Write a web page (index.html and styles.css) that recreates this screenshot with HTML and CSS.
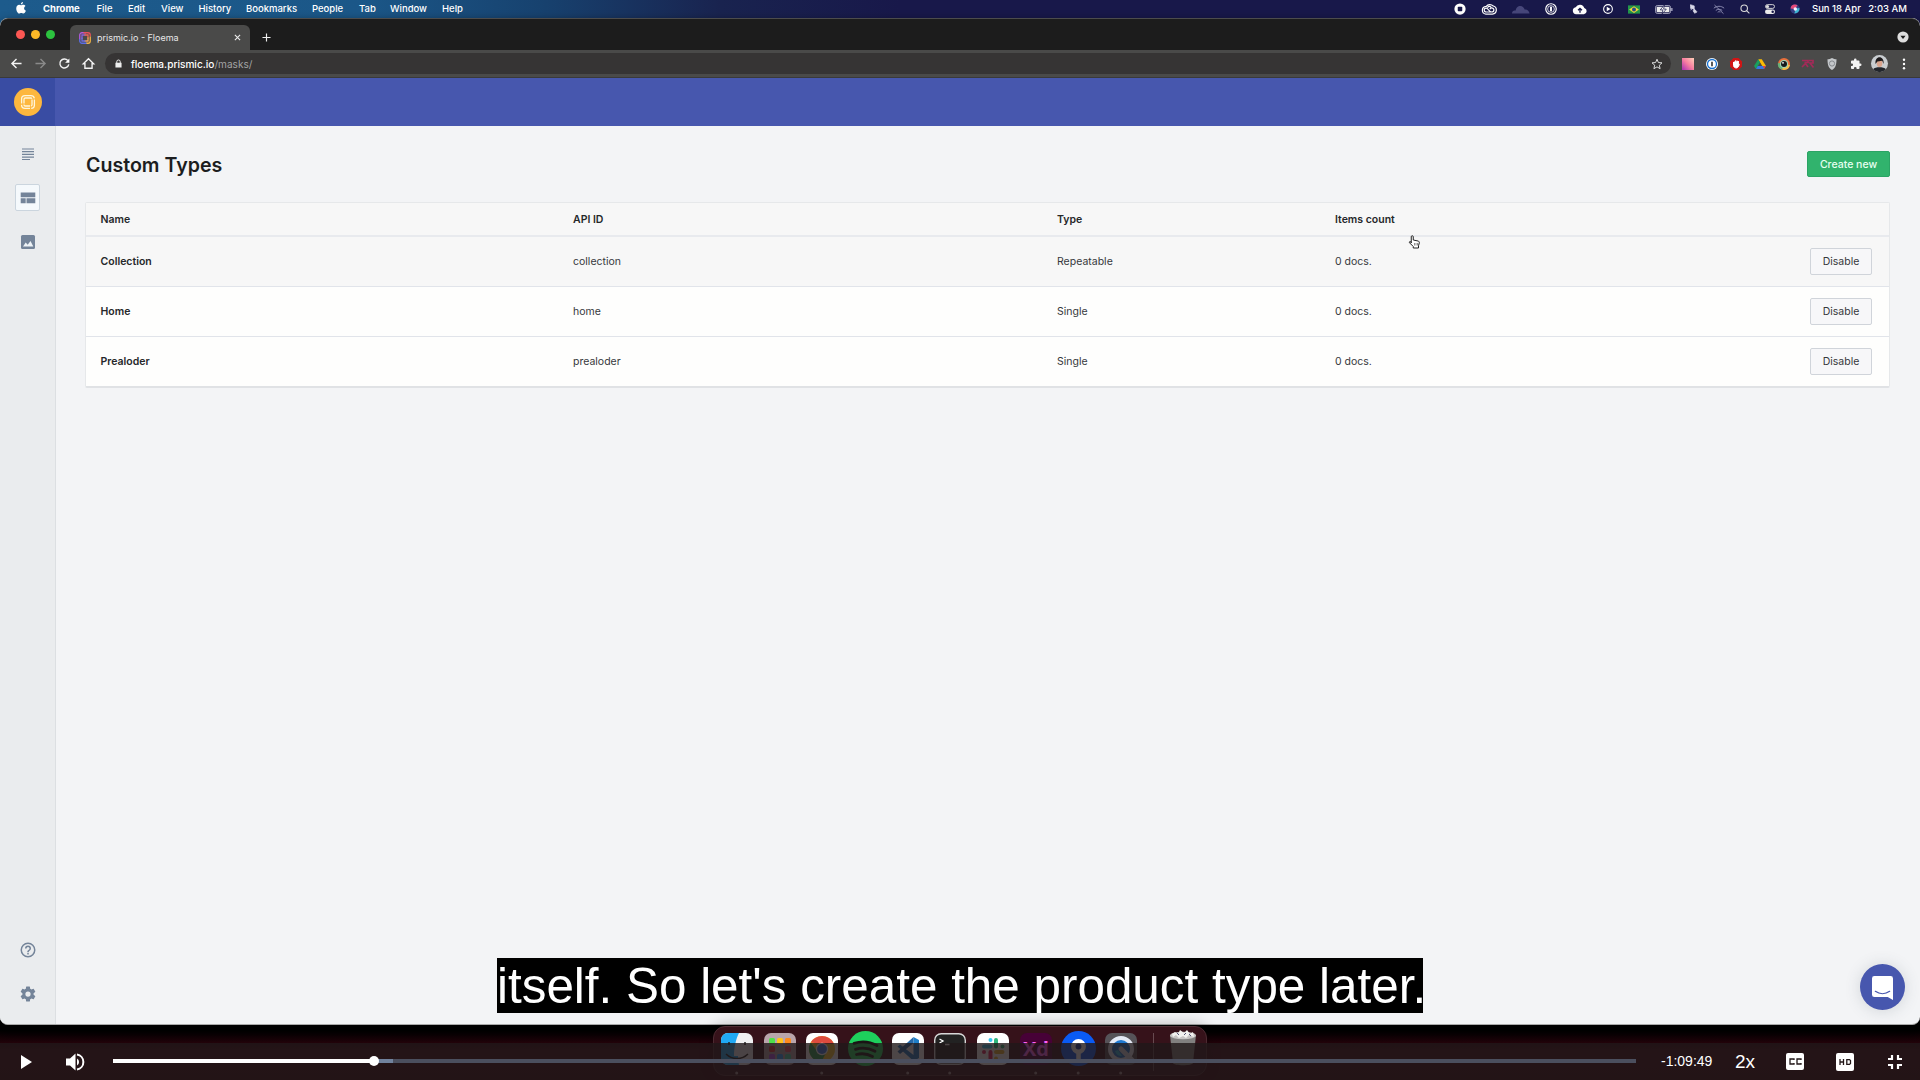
FILE: index.html
```html
<!DOCTYPE html>
<html lang="en">
<head>
<meta charset="utf-8">
<title>prismic.io - Floema</title>
<link rel="stylesheet" href="styles.css">
</head>
<body>
<div class="desktop">
  <header class="menubar">
    <svg class="apple" viewBox="0 0 20 24"><path d="M14 0c.2 2.500-2 5-4.300 5C9.400 2.600 11.800.2 14 0zM10 6.500c1 0 2.300-1.200 4.300-1.200 2 0 3.700 1 4.700 2.500-4 2.400-3.300 7.800.8 9.500-1 2.700-3 5.700-5 5.700-1.500 0-2.300-1-4.200-1s-2.700 1-4.200 1C3.700 23 .5 17.500.5 12.800c0-4.800 3-7.400 5.700-7.400 1.700 0 3 1.100 3.800 1.100z"/></svg>
    <nav class="menus"><b>Chrome</b><span>File</span><span>Edit</span><span>View</span><span>History</span><span>Bookmarks</span><span>People</span><span>Tab</span><span>Window</span><span>Help</span></nav>
    <div class="tray">
      <svg viewBox="0 0 16 16"><circle cx="8" cy="8" r="7.500" fill="#fff"/><rect x="5" y="5" width="6" height="6" rx="1" fill="#18184a"/></svg>
      <svg class="w16" viewBox="0 0 20 14" fill="none" stroke="#fff" stroke-width="1.500"><path d="M6 12.800h8.500a5.200 5.200 0 0 0 1-10.200C13 0 8.500 0 6.500 3 0 3.500 0 12 6 12.800z"/><path d="M12 10.200H6.500c-3.500 0-3.500-5 0-5 2.500 0 3.500 5 7 5s3.700-5.200 0-5.200c-1.500 0-2 .8-2.500 1.500M8 4.500c2-2.500 4-1.500 5 0"/></svg>
      <svg class="w18" viewBox="0 0 20 10"><path d="M0 9.500C0 6.500 2 6 4 6 5 2 7 1 9 1c3 0 4.500 2 5 4 3-.5 5 1.500 5.500 4.500z" fill="#47477a"/></svg>
      <svg viewBox="0 0 16 16" fill="none" stroke="#fff"><circle cx="8" cy="8" r="7" stroke-width="1.600"/><circle cx="8" cy="8" r="4.500"/><path d="M8 5v6" stroke-width="2.600"/></svg>
      <svg class="w16" viewBox="0 0 20 14"><path d="M5 13a4.500 4.500 0 0 1-.5-8.900A6 6 0 0 1 15.500 5 4.100 4.100 0 0 1 15 13z" fill="#fff"/><path d="M10 11V5.500M7.500 8 10 5.500 12.500 8" fill="none" stroke="#18184a" stroke-width="1.700"/></svg>
      <svg class="w11" viewBox="0 0 16 16"><circle cx="8" cy="8" r="7" fill="none" stroke="#fff" stroke-width="1.700"/><path d="M6 4.500 12 8l-6 3.500z" fill="#fff"/></svg>
      <svg class="w12" viewBox="0 0 16 11"><path d="M0 0h16v11H0z" fill="#23974a"/><path d="m8 1 6.500 4.500L8 10 1.500 5.500z" fill="#f5d437"/><circle cx="8" cy="5.500" r="2.600" fill="#25498f"/></svg>
      <svg class="w18" viewBox="0 0 24 12"><rect x=".7" y=".7" width="20" height="10.600" rx="2.500" fill="none" stroke="#c9c9dc"/><path d="M22.500 4v4" stroke="#c9c9dc" stroke-width="1.500"/><rect x="2.200" y="2.200" width="17" height="7.600" rx="1" fill="#eee"/><path d="M12.500 0 7 6.500h3.500L9.500 12 15 5.500h-3.500z" fill="#fff" stroke="#18184a"/></svg>
      <svg class="w11" viewBox="0 0 14 16"><path d="m3 1 6 2v5L3 7zM9 8l4 4-3 3-3-4z" fill="#d9d9e8" stroke="#d9d9e8"/><path d="m3 2 10 12M3 10l3-3" fill="none" stroke="#d9d9e8" stroke-width="1.300"/></svg>
      <svg class="w12" viewBox="0 0 18 14" fill="none" stroke="#8d8db2" stroke-width="1.500"><path d="M1 5c4.500-4 11.500-4 16 0M4 8.500c3-2.500 7-2.500 10 0M7 11.200c1-1 3-1 4 0M2 0l14 13.500"/></svg>
      <svg class="w11" viewBox="0 0 16 16" fill="none" stroke="#ddd" stroke-width="1.700"><circle cx="6.700" cy="6.700" r="5.200"/><path d="m10.500 10.500 4.500 4.500"/></svg>
      <svg class="w11" viewBox="0 0 16 16"><rect x=".8" y="1" width="14.400" height="6" rx="3" fill="none" stroke="#ddd" stroke-width="1.500"/><circle cx="4" cy="4" r="2.500" fill="#ddd"/><rect y="8.800" width="16" height="7" rx="3.500" fill="#eee"/><circle cx="12.300" cy="12.300" r="2" fill="#18184a"/></svg>
      <svg class="w11" viewBox="0 0 16 16"><circle cx="8" cy="8" r="7.500" fill="#343b83"/><path d="M1 7C1 2 7-1 12 2l-4 6z" fill="#e44978"/><path d="M15 6c1 5-3 9-8 9l2-7z" fill="#3fb8d5"/><circle cx="8.500" cy="8" r="2.800" fill="#eef"/></svg>
    </div>
    <div class="clock"><span>Sun 18 Apr</span><span>2:03 AM</span></div>
  </header>

  <main class="window">
    <div class="tabstrip">
      <div class="lights"><i class="red"></i><i class="yellow"></i><i class="green"></i></div>
      <div class="tab">
        <svg class="favicon" viewBox="0 0 24 24" fill="none" stroke-width="2.600"><path d="M1.500 15V6a4.500 4.500 0 0 1 4.500-4.500h8" stroke="#b45be0"/><path d="M9 1.500h9A4.500 4.500 0 0 1 22.500 6v3" stroke="#e8505b"/><path d="M22.500 9v9a4.500 4.500 0 0 1-4.500 4.500h-4" stroke="#f3b544"/><path d="M15 22.500H6A4.500 4.500 0 0 1 1.500 18v-4" stroke="#5b6ee8"/><path d="M6 14V6h7" stroke="#8661dc"/><path d="M11 6h7v7" stroke="#ed6755"/><path d="M18 11v7h-7" stroke="#f0a45a"/><path d="M13 18H6v-7" stroke="#6f6ce0"/></svg>
        <span>prismic.io - Floema</span>
        <svg class="close" viewBox="0 0 8 8"><path d="m1 1 6 6M7 1 1 7"/></svg>
      </div>
      <svg class="plus" viewBox="0 0 10 10"><path d="M5 .5v9M.5 5h9"/></svg>
      <svg class="tabsearch" viewBox="0 0 12 12"><circle cx="6" cy="6" r="5.600" fill="#dedede"/><path d="M3.400 4.800h5.200L6 8z" fill="#1c1c1c"/></svg>
    </div>
    <div class="toolbar">
      <div class="navbtns">
        <svg viewBox="0 0 12 12"><path d="M11.500 6H1.200M6 1 1 6l5 5"/></svg>
        <svg class="dim" viewBox="0 0 12 12"><path d="M.5 6h10.300M6 1l5 5-5 5"/></svg>
        <svg viewBox="0 0 12 12"><path d="M10.700 7A4.900 4.900 0 1 1 9.600 2.700"/><path d="M11.300.5v4.600H6.700z" fill="#fff" stroke="none"/></svg>
        <svg viewBox="0 0 12 12"><path d="M.4 6.300 6 .9l5.600 5.400H9.900V11.200H2.100V6.300z"/></svg>
      </div>
      <div class="omnibox">
        <svg class="lock" viewBox="0 0 8 10"><path d="M.5 4h7v5.500h-7z" fill="#eee"/><path d="M2 4.500V3a2 2 0 0 1 4 0v1.500" fill="none" stroke="#eee" stroke-width="1.100"/></svg>
        <p>floema.prismic.io<span>/masks/</span></p>
        <svg class="star" viewBox="0 0 24 24"><path d="m12 2.500 2.800 6.600 7.200.6-5.400 4.700 1.600 7-6.200-3.700-6.200 3.700 1.600-7L2 9.700l7.200-.6z"/></svg>
      </div>
      <div class="exts">
        <svg viewBox="0 0 12 12"><defs><linearGradient id="pk" x1="1" y1="0" x2="0" y2="1"><stop offset="0" stop-color="#ffd0b8"/><stop offset=".5" stop-color="#f77da0"/><stop offset="1" stop-color="#a82fb4"/></linearGradient></defs><path d="M0 0h12v12H0z" fill="url(#pk)"/></svg>
        <svg viewBox="0 0 12 12"><circle cx="6" cy="6" r="6" fill="#fff"/><circle cx="6" cy="6" r="4.500" fill="#fff" stroke="#1a73d1" stroke-width="1.300"/><path d="M6 3.700v4.600" stroke="#222" stroke-width="1.500"/></svg>
        <svg viewBox="0 0 12 12"><path d="M3.500 0h5L12 3.500v5L8.500 12h-5L0 8.500v-5z" fill="#d01515"/><path d="M3.500 4v3.500C3.500 9 5 10 6.300 10 8 10 9 8 9.300 6.200l-1 .3V3M4.300 6.500V3.500M5.600 6V2.300M7 6V2.500M8 6V3.200" fill="#fff" stroke="#fff" stroke-width="1"/></svg>
        <svg viewBox="0 0 12 12"><path d="M4.200 1.200h3.600L12 8H8.300z" fill="#fbbc04"/><path d="M4.200 1.200 6 4.400 2 11 0 8z" fill="#18a05e"/><path d="M3.700 8H12l-2 3H2z" fill="#3777e3"/><path d="M9 8h3l-2 3z" fill="#ea4335"/></svg>
        <svg viewBox="0 0 12 12"><circle cx="6" cy="6" r="6" fill="#e9703b"/><path d="M1 9A6 6 0 0 0 12 7L6 6z" fill="#f2c14c"/><path d="M0 5a6 6 0 0 0 4 6.700L6 6z" fill="#65b37a"/><circle cx="6" cy="6" r="4" fill="#9fd5b5"/><circle cx="6" cy="6" r="3" fill="#161b1e"/><circle cx="5" cy="4.800" r=".9" fill="#fff"/></svg>
        <svg viewBox="0 0 12 12"><path d="M0 2.500h6v2H2.500M0 9l3.500-3.500L6 9M7 2.500h4V5H8l3.500 4.500" fill="none" stroke="#a32a58" stroke-width="1.700"/></svg>
        <svg viewBox="0 0 12 12"><path d="M6 0c1.500 1 3 1.200 4.500 1.300C10.500 7 9.500 10 6 12 2.500 10 1.500 7 1.500 1.300 3 1.200 4.500 1 6 0z" fill="#c5c8cb"/><circle cx="6" cy="5.500" r="2.600" fill="none" stroke="#85898d"/></svg>
        <svg viewBox="0 0 24 24"><path d="M20.500 11H19V7a2 2 0 0 0-2-2h-4V3.500a2.500 2.500 0 0 0-5 0V5H4a2 2 0 0 0-2 2v3.800h1.500a2.700 2.700 0 0 1 0 5.400H2V20a2 2 0 0 0 2 2h3.800v-1.500a2.700 2.700 0 0 1 5.400 0V22H17a2 2 0 0 0 2-2v-4h1.500a2.500 2.500 0 0 0 0-5z" fill="#f2f2f2"/></svg>
      </div>
      <svg class="avatar" viewBox="0 0 16 16"><circle cx="8" cy="8" r="8" fill="#c9cdd0"/><path d="M2 13.500C4 11 12 11 14 13.500A8 8 0 0 1 2 13.500z" fill="#22252b"/><ellipse cx="8" cy="7.500" rx="2.700" ry="3.800" fill="#d9a48d"/><path d="M4.300 8.500C3 0 13 0 11.800 8.500L10.600 5.500 6 6z" fill="#1c191b"/></svg>
      <svg class="kebab" viewBox="0 0 4 12"><circle cx="2" cy="1.800" r="1.200"/><circle cx="2" cy="6" r="1.200"/><circle cx="2" cy="10.200" r="1.200"/></svg>
    </div>

    <div class="app">
      <aside class="side">
        <div class="brand"><svg viewBox="0 0 28 28"><circle cx="14" cy="14" r="14" fill="#fdb73e"/><g fill="none" stroke="#fff6dc" stroke-width="1.300"><rect x="7.600" y="7.600" width="12.800" height="12.800" rx="3.400" stroke-dasharray="10.500 1.200"/><rect x="10" y="10" width="8" height="8" rx="1.200" stroke-dasharray="6.800 .9"/></g></svg></div>
        <nav class="sidenav">
          <a><svg viewBox="0 0 14 14"><path d="M1 2h12M1 4.700h12M1 7.400h12M1 10.100h12M1 12.500h8" stroke="#748499" stroke-width="1.200"/></svg></a>
          <a class="active"><svg viewBox="0 0 14 14"><path d="M-.3 1.500h14.600v4.800H-.3zM-.3 7.300h5v5h-5zM5.500 7.300h8.800v5H5.500z" fill="#748499"/></svg></a>
          <a><svg viewBox="0 0 14 14"><rect width="14" height="14" rx="1.500" fill="#748499"/><path d="m2 11.500 2.700-4 2 2.300L9.500 6l2.800 5.500z" fill="#eef3f7"/></svg></a>
        </nav>
        <nav class="sidefoot">
          <svg viewBox="0 0 24 24"><path d="M11 18h2v-2h-2v2zm1-16a10 10 0 1 0 0 20 10 10 0 0 0 0-20zm0 18a8 8 0 1 1 0-16 8 8 0 0 1 0 16zm0-14a4 4 0 0 0-4 4h2a2 2 0 1 1 4 0c0 2-3 1.750-3 5h2c0-2.250 3-2.500 3-5a4 4 0 0 0-4-4z"/></svg>
          <svg viewBox="0 0 24 24"><path d="M19.430 12.980a7.800 7.800 0 0 0 0-1.960l2.110-1.650a.5.500 0 0 0 .12-.64l-2-3.460a.5.500 0 0 0-.61-.22l-2.490 1a7.300 7.300 0 0 0-1.690-.98l-.38-2.650A.5.500 0 0 0 14 2h-4a.5.500 0 0 0-.49.42l-.38 2.650c-.61.25-1.170.59-1.690.98l-2.490-1a.5.500 0 0 0-.61.220l-2 3.460a.5.500 0 0 0 .12.640l2.110 1.650a7.900 7.900 0 0 0 0 1.960l-2.110 1.650a.5.500 0 0 0-.12.640l2 3.460a.5.500 0 0 0 .61.220l2.490-1c.52.400 1.080.73 1.690.98l.38 2.650A.5.500 0 0 0 10 22h4a.5.500 0 0 0 .49-.42l.38-2.650c.61-.25 1.170-.59 1.690-.98l2.490 1a.5.500 0 0 0 .61-.22l2-3.460a.5.500 0 0 0-.12-.64zM12 15.500a3.500 3.500 0 1 1 0-7 3.500 3.500 0 0 1 0 7z"/></svg>
        </nav>
      </aside>
      <section class="page">
        <div class="bluebar"></div>
        <div class="content">
          <div class="titlebar"><h1>Custom Types</h1><button class="create">Create new</button></div>
          <div class="table">
            <div class="row head"><span>Name</span><span>API ID</span><span>Type</span><span>Items count</span></div>
            <div class="row hover"><b>Collection</b><span>collection</span><span>Repeatable</span><span>0 docs.</span><button>Disable</button></div>
            <div class="row"><b>Home</b><span>home</span><span>Single</span><span>0 docs.</span><button>Disable</button></div>
            <div class="row"><b>Prealoder</b><span>prealoder</span><span>Single</span><span>0 docs.</span><button>Disable</button></div>
          </div>
        </div>
      </section>
    </div>
  </main>

  <div class="dock">
    <svg viewBox="0 0 32 32"><rect width="32" height="32" rx="7" fill="#f0f0f2"/><path d="M18 0H7a7 7 0 0 0-7 7v18a7 7 0 0 0 7 7h11c-.8-3-1-6-1-9h-4C13 14 15 6 18 0z" fill="#20a9f5"/><path d="M8 9v3M24 9v3M5 21c6 6 16 6 22 0" fill="none" stroke="#222" stroke-width="1.500"/><circle class="dot" cx="15.700" cy="40" r="1.500"/></svg>
    <svg viewBox="0 0 32 32"><rect width="32" height="32" rx="7" fill="#b9a5ab"/><g><rect x="5" y="5" width="6" height="6" rx="1.500" fill="#4fe04a"/><rect x="13" y="5" width="6" height="6" rx="1.500" fill="#ffc21c"/><rect x="21" y="5" width="6" height="6" rx="1.500" fill="#ff8a1c"/><rect x="5" y="13" width="6" height="6" rx="1.500" fill="#e43b3b"/><rect x="13" y="13" width="6" height="6" rx="1.500" fill="#aaa"/><rect x="21" y="13" width="6" height="6" rx="1.500" fill="#f0506a"/><rect x="5" y="21" width="6" height="6" rx="1.500" fill="#b04be0"/><rect x="13" y="21" width="6" height="6" rx="1.500" fill="#2fa0ff"/><rect x="21" y="21" width="6" height="6" rx="1.500" fill="#46cfa5"/></g></svg>
    <svg viewBox="0 0 32 32"><rect width="32" height="32" rx="7" fill="#fff"/><circle cx="16" cy="16" r="13" fill="#f7c52d"/><path d="M4.700 9.500A13 13 0 0 1 27.300 9.500L27.500 11H16z" fill="#dd4b3e"/><path d="M4.700 9.500a13 13 0 0 0 10.500 19.500L20.500 19 11 18z" fill="#2c9e50"/><circle cx="16" cy="16" r="6.200" fill="#fff"/><circle cx="16" cy="16" r="4.900" fill="#3f7ee8"/><circle class="dot" cx="15.700" cy="40" r="1.500"/></svg>
    <svg class="round" viewBox="0 0 35 35"><circle cx="17.500" cy="17.500" r="17.500" fill="#1ed05c"/><path d="M6 12.300c8-2.500 16-1.600 23 2.200M7.500 18.300c7-2 13.500-1.200 19.500 2M8.500 23.500c6-1.500 11-.8 16 2" fill="none" stroke="#191414" stroke-width="2.800" stroke-linecap="round"/></svg>
    <svg viewBox="0 0 32 32"><rect width="32" height="32" rx="7" fill="#fff"/><path d="M21.500 4 27 7v18l-5.500 3-16-14.500 2.500-2L21.500 22z" fill="#1f7fc9"/><path d="m5.500 18.500 16-14.500v6L8 21z" fill="#2568a8"/><circle class="dot" cx="15.700" cy="40" r="1.500"/></svg>
    <svg viewBox="0 0 32 32"><rect x=".7" y=".7" width="30.600" height="30.600" rx="6.500" fill="#222" stroke="#d8d8d8" stroke-width="1.400"/><path d="m5.500 6 3.500 2-3.500 2M11 11.500h4.500" fill="none" stroke="#fff" stroke-width="1.300"/><circle class="dot" cx="15.700" cy="40" r="1.500"/></svg>
    <svg viewBox="0 0 32 32"><rect width="32" height="32" rx="7" fill="#fff"/><g fill="none" stroke-width="4" stroke-linecap="round"><path d="M13.500 7v0M7 13.500h6.500" stroke="#36c5f0"/><path d="M19 7v6.500M25.500 13.500v0" stroke="#2eb67d"/><path d="M19 19h6.500M19 25.500v0" stroke="#ecb22e"/><path d="M13.500 19v6.500M7 19v0" stroke="#e01e5a"/></g></svg>
    <svg viewBox="0 0 32 32"><rect width="32" height="32" rx="7" fill="#470137"/><text class="xd" x="16" y="23" text-anchor="middle">Xd</text><circle class="dot" cx="15.700" cy="40" r="1.500"/></svg>
    <svg class="round" viewBox="0 0 35 35"><circle cx="17.500" cy="17.500" r="17.500" fill="#0a5bf5"/><circle cx="17.500" cy="15.500" r="5.200" fill="#173b9c" stroke="#fff" stroke-width="4.500"/><path d="M17.500 20v8" stroke="#fff" stroke-width="4.500"/><circle class="dot" cx="17.200" cy="42" r="1.500"/></svg>
    <svg viewBox="0 0 32 32"><rect width="32" height="32" rx="7" fill="#565358"/><circle cx="16" cy="16" r="11" fill="#1e78d0" stroke="#e4e9f5" stroke-width="4"/><path d="m16 16 11 11" stroke="#d5d9e4" stroke-width="5" stroke-linecap="round"/><path d="M10 18a7 7 0 0 0 7 5l-4-6z" fill="#30bfe2"/><circle class="dot" cx="15.700" cy="40" r="1.500"/></svg>
    <i class="sep"></i>
    <svg class="trash" viewBox="0 0 28 36"><path d="M1 5h26l-3 28c-.3 3-19.700 3-20 0z" fill="#81807f"/><ellipse cx="14" cy="5.500" rx="13" ry="3.800" fill="#c7c5c4"/><path d="m3 4 3-2 3 2 2-4 4 3 3-3 3 4 3-2 1 5-5-2-3 3-3-2-4 2-3-3-3 2z" fill="#f2f2ef"/><path d="m8 3 2 2M15 5l2-2M20 4l2 2" stroke="#557" stroke-width="1"/></svg>
  </div>

  <div class="intercom"><svg viewBox="0 0 22 25"><path d="M2.500 0h17A2.500 2.500 0 0 1 22 2.500V25l-5.500-3h-14A2.500 2.500 0 0 1 0 19.500v-17A2.500 2.500 0 0 1 2.500 0z" fill="#fff"/><path d="M3.500 16c4.500 3.300 10.500 3.300 15 0" fill="none" stroke="#4757ae" stroke-width="1.300" stroke-linecap="round"/></svg></div>
  <svg class="cursor" viewBox="0 0 24 28"><path d="M6.500 16V3.500a2 2 0 0 1 4 0V10l9.500 2c2 .5 3 2 2.500 4L21 21.500V26H10.500v-3L3 15.500c-1-2 1-3.500 2.500-2z" fill="#fff" stroke="#222" stroke-width="2"/><path d="M13 16v5M16 16v5M19 16v5" stroke="#444" stroke-width="1.200"/></svg>
  <div class="caption">itself. So let's create the product type later.</div>

  <footer class="player">
    <svg class="play" viewBox="0 0 11 14"><path d="M0 0v14l11-7z"/></svg>
    <svg class="vol" viewBox="0 0 18 18"><path d="M0 5.500h4L9.500.5v17L4 12.500H0z"/><path d="M11 5.500a4 4 0 0 1 0 7z"/><path d="M11 1.500a7.600 7.600 0 0 1 0 15" fill="none" stroke="#fff" stroke-width="2"/></svg>
    <div class="track"><i class="buffer"></i><i class="played"></i><i class="knob"></i></div>
    <time>-1:09:49</time>
    <span class="speed">2x</span>
    <svg class="cc" viewBox="0 0 18 17"><rect width="18" height="17" rx="2" fill="#fff"/><path d="M8 7V6H4v5h4v-1M15 7V6h-4v5h4v-1" fill="none" stroke="#231718" stroke-width="1.300"/></svg>
    <svg class="hd" viewBox="0 0 18 18"><rect width="18" height="18" rx="2" fill="#fff"/><path d="M4 6v6M7.500 6v6M4 9h3.500M10.800 6.600h2.700l1 1v2.800l-1 1h-2.700z" fill="none" stroke="#231718" stroke-width="1.300"/></svg>
    <svg class="fs" viewBox="0 0 14 14"><path d="M0 4h4V0M14 4h-4V0M0 10h4v4M14 10h-4v4" fill="none" stroke="#fff" stroke-width="2.200"/></svg>
  </footer>
</div>
</body>
</html>
```
FILE: styles.css
```css
* { box-sizing: border-box; }
body { margin: 0; font-family: Inter, "Liberation Sans", sans-serif; }
svg { display: block; flex: none; overflow: visible; }
i { display: block; }
h1, p { margin: 0; }
button { font-family: inherit; padding: 0; margin: 0; }

.desktop {
  position: relative;
  width: 1920px;
  height: 1080px;
  overflow: hidden;
  display: flex;
  flex-direction: column;
  background: linear-gradient(90deg, #1d5b8c 0, #1b5788 360px, #17426f 540px, #19234f 720px, #18184a 900px) 0 0 / 100% 40px no-repeat,
    linear-gradient(#000 1030px, #350510 1050px, #30050e 1080px);
}

/* macOS menu bar */
.menubar { display: flex; align-items: center; height: 18px; flex: none; color: #fff; font-size: 9.5px; font-weight: 500; line-height: 18px; }
.apple { width: 10px; height: 12px; margin-left: 16px; fill: #fff; margin-top: -2px; }
.menus { display: grid; grid-template-columns: 53.5px 31.5px 33px 37.5px 47.500px 66px 47px 31px 52px 40px; margin-left: 17px; }
.menus b { font-weight: 700; }
.tray { display: flex; align-items: center; justify-content: space-between; margin-left: auto; width: 346px; }
.tray svg { width: 12px; height: 12px; }
.tray .w11 { width: 10px; height: 10px; }
.tray .w12 { width: 12px; height: 9px; }
.tray .w16 { width: 16px; height: 11px; }
.tray .w18 { width: 18px; height: 9px; }
.clock { display: flex; justify-content: space-between; width: 95px; margin: 0 13px 0 12px; white-space: nowrap; }

/* browser window */
.window { display: flex; flex-direction: column; height: 1007px; border-radius: 8px; overflow: hidden; background: #f3f4f6; border-bottom: 1px solid #a9a9a9; box-shadow: 0 6px 12px #000; }
.tabstrip { display: flex; align-items: flex-end; height: 32px; background: #1c1c1c; border-top: 1px solid #4c4c4c; border-radius: 8px 8px 0 0; flex: none; }
.lights { display: flex; gap: 6px; margin-left: 16px; padding-bottom: 11px; width: 54px; }
.lights i { width: 9px; height: 9px; border-radius: 50%; }
.red { background: #fc5753; }
.yellow { background: #fdb827; }
.green { background: #2cc33f; }
.tab { display: flex; align-items: center; width: 180px; height: 25px; padding: 0 9px; border-radius: 6px 6px 0 0; background: #4a4a49; color: #e8e8e8; font-size: 9px; }
.favicon { width: 12px; height: 12px; margin-right: 6px; }
.close { width: 7px; height: 7px; margin-left: auto; stroke: #eee; stroke-width: 1.200; }
.plus { width: 9px; height: 9px; margin: 0 0 8px 12px; stroke: #eee; stroke-width: 1.300; }
.tabsearch { width: 12px; height: 12px; margin: 0 11px 7px auto; }
.toolbar { display: flex; align-items: center; height: 28px; flex: none; background: #4a4a49; border-bottom: 1px solid #3a3a3a; padding-left: 11px; }
.navbtns { display: flex; gap: 13px; width: 94px; }
.navbtns svg { width: 11px; height: 11px; stroke: #f4f4f4; stroke-width: 1.500; fill: none; }
.navbtns .dim { stroke: #8a8a8a; }
.omnibox { display: flex; align-items: center; width: 1566px; height: 21px; border-radius: 11px; background: #363434; padding: 0 8px 0 10px; color: #fff; font-size: 10.100px; }
.omnibox p { font-weight: 500; }
.omnibox p span { color: #a3a3a3; font-weight: 400; }
.lock { width: 7px; height: 9px; margin-right: 9px; }
.star { width: 12px; height: 12px; margin-left: auto; fill: none; stroke: #ddd; stroke-width: 2; }
.exts { display: flex; gap: 12px; margin-left: 11px; }
.exts svg { width: 12px; height: 12px; }
.avatar { width: 17px; height: 17px; margin-left: 9px; }
.kebab { width: 4px; height: 12px; margin-left: 14px; fill: #fff; }

/* Prismic app */
.app { display: flex; flex: 1; min-height: 0; }
.side { display: flex; flex-direction: column; width: 56px; background: #eaecee; border-right: 1px solid #dcdfe2; }
.brand { display: flex; align-items: center; justify-content: center; width: 55px; height: 48px; background: #394ca3; }
.brand svg { width: 28px; height: 28px; }
.sidenav { display: flex; flex-direction: column; align-items: center; gap: 17px; padding-top: 14px; }
.sidenav a { display: flex; align-items: center; justify-content: center; width: 25px; height: 27px; border: 1px solid transparent; border-radius: 2px; }
.sidenav .active { background: #f5f9fc; border-color: #cbd5de; }
.sidenav svg { width: 14px; height: 14px; }
.sidefoot { display: flex; flex-direction: column; align-items: center; gap: 26px; margin-top: auto; padding-bottom: 21px; }
.sidefoot svg { width: 18px; height: 18px; fill: #748499; }
.page { flex: 1; display: flex; flex-direction: column; }
.bluebar { height: 48px; background: #4757ae; margin-left: -1px; }
.content { padding: 25px 30px 0 29px; }
.titlebar { display: flex; justify-content: space-between; align-items: center; height: 26px; padding-left: 1px; }
h1 { font-size: 19.600px; font-weight: 600; color: #1c1d20; line-height: 26px; margin-top: 2px; }
.create { width: 83px; height: 26px; border: 1px solid #2ba465; border-radius: 2px; background: #31b36d; color: #e6fff0; font-size: 10.5px; font-weight: 500; }
.table { margin-top: 25px; border: 1px solid #e6e8ea; border-bottom: 2px solid #e0e2e5; border-radius: 2px; background: #fefefd; }
.row { display: grid; grid-template-columns: 472.500px 484px 278px 1fr 62px; align-items: center; height: 50px; padding: 0 17px 0 14.500px; border-top: 1px solid #e1e4ea; font-size: 10.5px; color: #36383c; }
.row b { font-weight: 600; color: #25272a; }
.row.head { height: 32px; border-top: 0; background: #f7f7f7; font-weight: 600; color: #25272a; }
.row.hover { height: 51px; background: #f7f7f7; border-top-width: 2px; border-color: #e8eaee; }
.row button { width: 62px; height: 27px; border: 1px solid #d0d4da; border-radius: 2px; background: #f7f7f9; color: #36383c; font-size: 10.5px; }

/* dock */
.dock { position: absolute; left: 713px; top: 1026px; width: 494px; height: 50px; display: flex; align-items: flex-start; gap: 10.700px; padding: 6px 0 0 7px; border: 1px solid #4b2a31; border-radius: 12px; background: #36121a; box-shadow: 0 -2px 14px rgba(0, 0, 0, .22); }
.dock svg { width: 32px; height: 32px; }
.dock .round { width: 35px; height: 35px; margin: -2px -1.500px 0; }
.dock .trash { width: 28px; height: 36px; margin-top: -3px; margin-left: 4px; }
.dot { fill: #9d8a8e; }
.xd { fill: #ff61f6; font: 700 20px "Open Sans", sans-serif; }
.sep { width: 1px; height: 38px; background: #674a50; margin: 0 0 0 5px; }

/* overlays */
.intercom { position: absolute; left: 1860px; top: 964px; width: 45px; height: 46px; display: flex; align-items: center; justify-content: center; border-radius: 50%; background: #4757ae; box-shadow: 0 1px 16px rgba(60, 80, 90, .18); }
.intercom svg { width: 21px; height: 24px; margin-top: 1px; }
.cursor { position: absolute; left: 1408px; top: 235px; width: 12px; height: 14px; }
.caption { position: absolute; left: 497px; top: 958px; width: 926px; height: 55px; background: #000; color: #fff; font: 49.400px/56px "Liberation Sans", Arial, sans-serif; white-space: nowrap; }
.player { position: absolute; left: 0; top: 1043px; width: 1920px; height: 37px; display: flex; align-items: center; padding-left: 21px; background: rgba(32, 24, 25, .8); color: #fff; font-family: "Liberation Sans", Arial, sans-serif; }
.play { width: 11px; height: 14px; fill: #fff; }
.vol { width: 18px; height: 18px; margin-left: 34px; fill: #fff; }
.track { position: relative; width: 1523px; height: 4px; margin: 0 0 1px 29px; background: #4b4f5e; }
.track i { position: absolute; left: 0; top: 0; height: 4px; }
.buffer { width: 280px; background: #71829d; }
.played { width: 261px; background: #fff; }
.track .knob { left: 256px; top: -3px; width: 10px; height: 10px; border-radius: 50%; background: #fff; }
.player time { margin-left: 25px; width: 74px; font-size: 14px; margin-top: -2px; }
.speed { width: 51px; font-size: 19px; }
.cc { width: 18px; height: 17px; }
.hd { width: 18px; height: 18px; margin-left: 32px; }
.fs { width: 14px; height: 14px; margin-left: 34px; }
```
